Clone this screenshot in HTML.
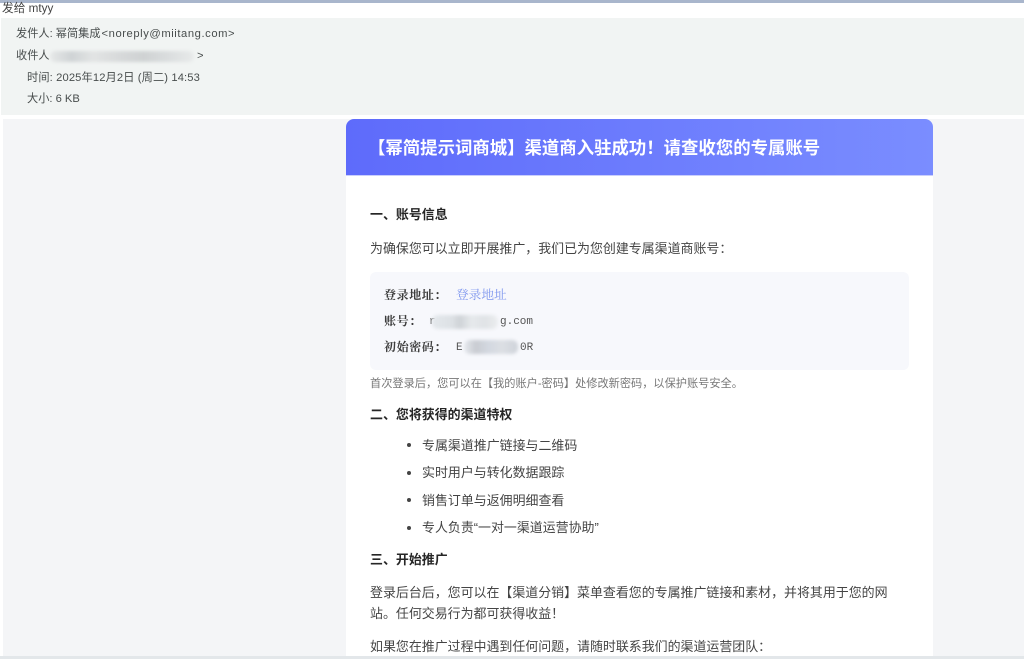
<!DOCTYPE html>
<html lang="zh-CN">
<head>
<meta charset="utf-8">
<title>邮件</title>
<style>
html,body{margin:0;padding:0;background:#fff}
body{position:relative;width:1024px;height:659px;overflow:hidden;font-family:"Liberation Sans","Noto Sans CJK SC",sans-serif;color:#3c3c3c}
.a{position:absolute;white-space:nowrap}
.t{position:absolute;white-space:nowrap;line-height:16px;filter:blur(.3px)}
.hd{font-size:11.2px;color:#484d4d}
.b{font-size:12.95px;color:#444}
.h{font-size:12.95px;font-weight:700;color:#262626}
.s{font-family:"Liberation Serif","Noto Serif CJK SC",serif;font-size:11.5px;color:#555}
.m{font-family:"Liberation Mono",monospace;font-size:11px;color:#555}
.sb{font-weight:700;color:#3c3c3c;font-size:12px;letter-spacing:.6px}
.blur{position:absolute;filter:blur(1.5px);border-radius:6px}
</style>
</head>
<body>
<div class="a" style="left:0;top:0;width:1024px;height:3px;background:#a9b6cc"></div>
<div class="t hd" style="left:2px;top:1px;font-size:11.7px;color:#444;line-height:15px">发给 mtyy</div>
<div class="a" style="left:1px;top:18px;width:1023px;height:97px;background:#f1f4f3"></div>

<div class="t hd" style="left:16px;top:26px">发件人: 幂简集成<span style="letter-spacing:.58px;margin-left:1px">&lt;noreply@miitang.com&gt;</span></div>
<div class="t hd" style="left:16px;top:48px">收件人</div>
<div class="blur" style="left:50px;top:51px;width:144px;height:11px;background:linear-gradient(90deg,#e6e8e8,#cfd3d5 15%,#e2e4e4 30%,#d6d8d9 50%,#cfd2d3 65%,#dcdfe0 85%,#e8eaea)"></div>
<div class="t hd" style="left:197px;top:48px">&gt;</div>
<div class="t hd" style="left:27px;top:70px;letter-spacing:.13px">时间: 2025年12月2日 (周二) 14:53</div>
<div class="t hd" style="left:27px;top:91px">大小: 6 KB</div>

<div class="a" style="left:3px;top:119px;width:1021px;height:537px;background:#f4f5f7"></div>

<div class="a" style="left:346px;top:119px;width:587px;height:537px;background:#fff;border-radius:8px 8px 0 0"></div>
<div class="a" style="left:346px;top:119px;width:587px;height:56px;border-radius:8px 8px 0 0;background:linear-gradient(90deg,#5e6bfb,#7a8dff)"></div>
<div class="a" style="left:346px;top:175px;width:587px;height:1px;background:#c9cefc"></div>
<div class="t" style="left:368px;top:138px;font-size:17.4px;line-height:20px;font-weight:700;color:#fff">【幂简提示词商城】渠道商入驻成功！请查收您的专属账号</div>

<div class="t h" style="left:370px;top:207px">一、账号信息</div>
<div class="t b" style="left:370px;top:241px">为确保您可以立即开展推广，我们已为您创建专属渠道商账号：</div>

<div class="a" style="left:370px;top:272px;width:539px;height:98px;background:#f7f8fc;border-radius:6px"></div>
<div class="t s sb" style="left:384px;top:287px">登录地址：</div>
<div class="t s" style="left:456px;top:287px;color:#7f97ee;font-size:12.7px">登录地址</div>
<div class="t s sb" style="left:384px;top:313px">账号：</div>
<div class="t m" style="left:429px;top:314px">r</div>
<div class="blur" style="left:432px;top:315px;width:66px;height:14px;background:linear-gradient(90deg,#e4e8ec,#dde1e5 30%,#cfd3d7 42%,#e6e9ec 60%,#e0e3e6 80%,#ebedef)"></div>
<div class="t m" style="left:500px;top:314px">g.com</div>
<div class="t s sb" style="left:384px;top:339px">初始密码：</div>
<div class="t m" style="left:456px;top:340px">E</div>
<div class="blur" style="left:464px;top:340px;width:54px;height:14px;background:linear-gradient(90deg,#e6e9ee,#c9ccd2 22%,#d3d8e0 45%,#dcdfe4 70%,#cfd3da)"></div>
<div class="t m" style="left:520px;top:340px">0R</div>

<div class="t" style="left:370px;top:376px;font-size:11.2px;color:#777">首次登录后，您可以在【我的账户-密码】处修改新密码，以保护账号安全。</div>

<div class="t h" style="left:370px;top:407px">二、您将获得的渠道特权</div>
<div class="a" style="left:407px;top:443px;width:4px;height:4px;border-radius:50%;background:#444"></div>
<div class="t b" style="left:422px;top:438px">专属渠道推广链接与二维码</div>
<div class="a" style="left:407px;top:471px;width:4px;height:4px;border-radius:50%;background:#444"></div>
<div class="t b" style="left:422px;top:465px">实时用户与转化数据跟踪</div>
<div class="a" style="left:407px;top:498px;width:4px;height:4px;border-radius:50%;background:#444"></div>
<div class="t b" style="left:422px;top:493px">销售订单与返佣明细查看</div>
<div class="a" style="left:407px;top:526px;width:4px;height:4px;border-radius:50%;background:#444"></div>
<div class="t b" style="left:422px;top:520px">专人负责“一对一渠道运营协助”</div>

<div class="t h" style="left:370px;top:552px">三、开始推广</div>
<div class="t b" style="left:370px;top:585px">登录后台后，您可以在【渠道分销】菜单查看您的专属推广链接和素材，并将其用于您的网</div>
<div class="t b" style="left:370px;top:606px">站。任何交易行为都可获得收益！</div>
<div class="t b" style="left:370px;top:639px">如果您在推广过程中遇到任何问题，请随时联系我们的渠道运营团队：</div>
<div class="a" style="left:0;top:656px;width:1024px;height:3px;background:#e3e7ea"></div>
</body>
</html>
